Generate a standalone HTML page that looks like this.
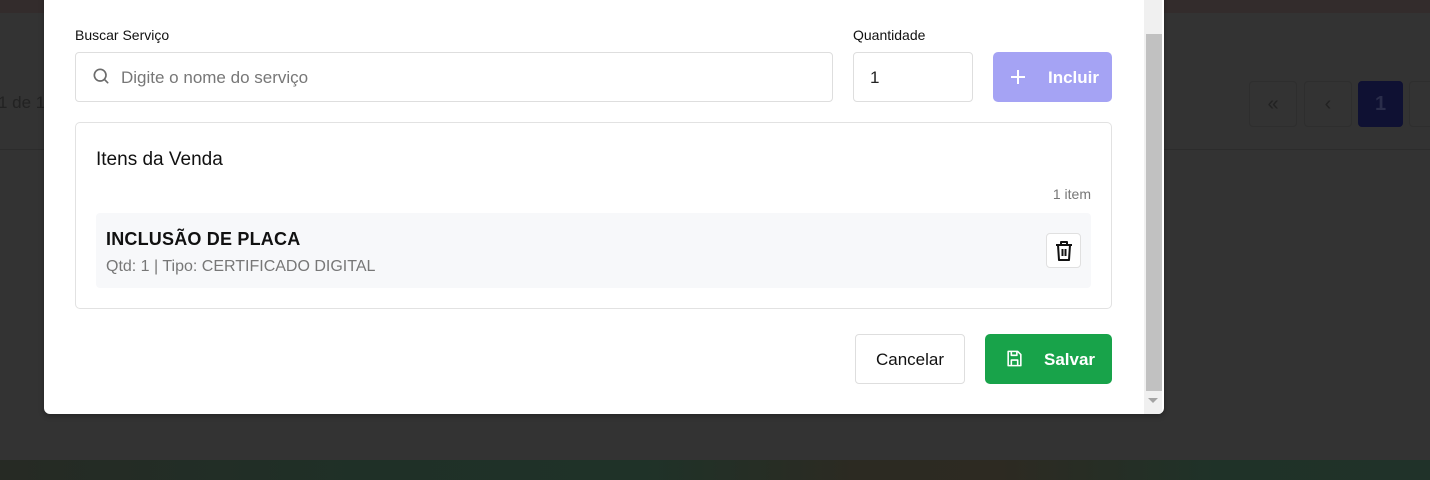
<!DOCTYPE html>
<html><head><meta charset="utf-8"><style>
*{box-sizing:border-box;margin:0;padding:0}
body{width:1430px;height:480px;overflow:hidden;background:#333333;font-family:"Liberation Sans",sans-serif;position:relative}
.abs{position:absolute}
.topstrip{left:0;top:0;width:1430px;height:13px;background:#332c2c}
.hline{left:0;top:149px;width:1430px;height:1px;background:#2c2c2c}
.bot{left:0;top:460px;width:1430px;height:20px;background:linear-gradient(90deg,#262a24,#1f3027 25%,#1f3228 45%,#2c2a22 60%,#2d2a22 70%,#1f3228 85%,#203229)}
.pg{top:81px;height:46px;border:1px solid #2e2e2e;border-radius:4px;color:#222;font-size:20px;display:flex;align-items:center;justify-content:center}
.modal{left:44px;top:-10px;width:1120px;height:424px;background:#fff;border-radius:0 0 6px 6px;box-shadow:0 2px 6px rgba(0,0,0,.3);overflow:hidden}
.lbl{font-size:14px;color:#111}
.inp{border:1px solid #dedede;border-radius:4px;background:#fff}
.sb{left:1100px;top:10px;width:18px;height:414px;background:#f0f0f0}
.thumb{left:1102px;top:44px;width:16px;height:357px;background:#c1c1c1}
</style></head><body>
<div class="abs topstrip"></div>
<div class="abs hline"></div>
<div class="abs" style="left:-2px;top:93px;font-size:17px;color:#222">1 de 1</div>
<div class="abs pg" style="left:1249px;width:48px">«</div>
<div class="abs pg" style="left:1304px;width:48px">‹</div>
<div class="abs pg" style="left:1358px;width:45px;background:#0f1133;border-color:#0f1133;color:#2a2d4a;font-weight:bold">1</div>
<div class="abs pg" style="left:1409px;width:40px"></div>
<div class="abs bot"></div>

<div class="abs modal">
 <div class="abs lbl" style="left:31px;top:37px">Buscar Serviço</div>
 <div class="abs inp" style="left:31px;top:62px;width:758px;height:50px">
  <svg class="abs" style="left:15px;top:13px" width="20" height="20" viewBox="0 0 24 24" fill="none" stroke="#6b6b6b" stroke-width="2" stroke-linecap="round"><circle cx="11" cy="11" r="7"/><path d="M20 20l-4-4"/></svg>
  <div class="abs" style="left:45px;top:15px;font-size:17px;color:#777">Digite o nome do serviço</div>
 </div>
 <div class="abs lbl" style="left:809px;top:37px">Quantidade</div>
 <div class="abs inp" style="left:809px;top:62px;width:120px;height:50px"><div class="abs" style="left:16px;top:15px;font-size:17px;color:#222">1</div></div>
 <div class="abs" style="left:949px;top:62px;width:119px;height:50px;background:#a5a3f4;border-radius:5px;color:#fff;font-weight:bold;font-size:17px">
  <svg class="abs" style="left:18px;top:18px" width="14" height="14" viewBox="0 0 14 14" stroke="#fff" stroke-width="2"><path d="M7 0v14M0 7h14"/></svg>
  <div class="abs" style="left:55px;top:16px">Incluir</div>
 </div>
 <div class="abs" style="left:31px;top:132px;width:1037px;height:187px;border:1px solid #e2e2e2;border-radius:5px">
  <div class="abs" style="left:20px;top:26px;font-size:19px;color:#111">Itens da Venda</div>
  <div class="abs" style="right:20px;top:63px;font-size:14px;color:#777">1 item</div>
  <div class="abs" style="left:20px;top:90px;width:995px;height:75px;background:#f7f8fa;border-radius:4px">
   <div class="abs" style="left:10px;top:16px;font-size:18px;color:#111;font-weight:bold;letter-spacing:.2px">INCLUSÃO DE PLACA</div>
   <div class="abs" style="left:10px;top:45px;font-size:16px;color:#777">Qtd: 1 | Tipo: CERTIFICADO DIGITAL</div>
   <div class="abs" style="left:950px;top:20px;width:35px;height:35px;background:#fff;border:1px solid #e0e0e0;border-radius:4px">
    <svg class="abs" style="left:7px;top:6px" width="20" height="22" viewBox="0 0 20 22" fill="none" stroke="#111" stroke-width="2" stroke-linejoin="round"><path d="M2 5h16M7 5V2h6v3M4 5l1 15h10l1-15M8.5 9v7M11.5 9v7"/></svg>
   </div>
  </div>
 </div>
 <div class="abs inp" style="left:811px;top:344px;width:110px;height:50px;font-size:17px;color:#111;display:flex;align-items:center;justify-content:center;padding-top:2px">Cancelar</div>
 <div class="abs" style="left:941px;top:344px;width:127px;height:50px;background:#18a34a;border-radius:5px;color:#fff;font-weight:bold;font-size:17px">
  <svg class="abs" style="left:20px;top:15px" width="19" height="19" viewBox="0 0 24 24" fill="none" stroke="#fff" stroke-width="2" stroke-linejoin="round"><path d="M4 3h12l4 4v14H4z"/><path d="M8 3v5h7V3M8 21v-7h8v7"/></svg>
  <div class="abs" style="left:59px;top:16px">Salvar</div>
 </div>
 <div class="abs sb"></div>
 <div class="abs thumb"></div>
 <div class="abs" style="left:1104px;top:408px;width:0;height:0;border-left:5px solid transparent;border-right:5px solid transparent;border-top:5px solid #a3a3a3"></div>
</div>
</body></html>
